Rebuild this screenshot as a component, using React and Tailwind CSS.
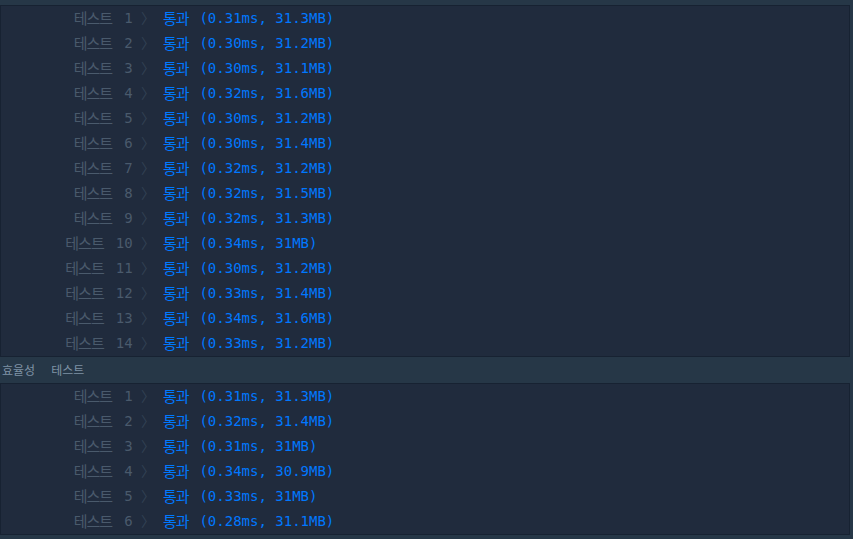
import React from "react";

const acc = [
  ["0.31ms", "31.3MB"],
  ["0.30ms", "31.2MB"],
  ["0.30ms", "31.1MB"],
  ["0.32ms", "31.6MB"],
  ["0.30ms", "31.2MB"],
  ["0.30ms", "31.4MB"],
  ["0.32ms", "31.2MB"],
  ["0.32ms", "31.5MB"],
  ["0.32ms", "31.3MB"],
  ["0.34ms", "31MB"],
  ["0.30ms", "31.2MB"],
  ["0.33ms", "31.4MB"],
  ["0.34ms", "31.6MB"],
  ["0.33ms", "31.2MB"],
];

const eff = [
  ["0.31ms", "31.3MB"],
  ["0.32ms", "31.4MB"],
  ["0.31ms", "31MB"],
  ["0.34ms", "30.9MB"],
  ["0.33ms", "31MB"],
  ["0.28ms", "31.1MB"],
];

const mono = {
  fontFamily: '"DejaVu Sans Mono", "Noto Sans CJK KR", monospace',
};

function Row({ n, t, m }) {
  return (
    <div className="flex h-[25px] items-center whitespace-pre text-[14px]" style={mono}>
      <span className="flex w-[154px] items-center justify-end">
        <span className="text-[#4a5a6c]">
          <span className="inline-block w-[42px] translate-y-[1px] text-[15px] tracking-[-1px] leading-none">
            테스트
          </span>
          {` ${n} `}
        </span>
        <span className="inline-block w-[14px] text-[#324154]">〉</span>
      </span>
      <span className="ml-[8px] text-[#0078ff]">
        <span className="inline-block w-[28px] translate-y-[1px] text-[15px] tracking-[-1px] leading-none">
          통과
        </span>
        {` (${t}, ${m})`}
      </span>
    </div>
  );
}

function Box({ rows }) {
  return (
    <div className="mr-[3px] border border-[#172232] bg-[#202b3d]">
      {rows.map((r, i) => (
        <Row key={i} n={i + 1} t={r[0]} m={r[1]} />
      ))}
    </div>
  );
}

export default function App() {
  return (
    <div className="h-[539px] w-[853px] overflow-hidden bg-[#263747] pt-[5px]">
      <Box rows={acc} />
      <div
        className="flex h-[26px] items-center pl-[2px] text-[12px] text-[#7f92a5]"
        style={{ fontFamily: '"Noto Sans CJK KR", sans-serif' }}
      >
        <span>효율성</span>
        <span className="ml-[16px]">테스트</span>
      </div>
      <Box rows={eff} />
    </div>
  );
}
